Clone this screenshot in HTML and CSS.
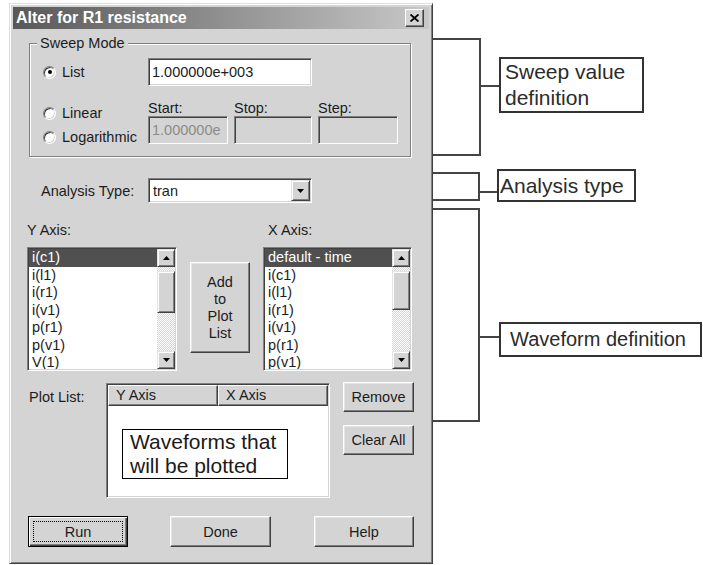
FILE: index.html
```html
<!DOCTYPE html>
<html lang="en">

<head>
    <meta charset="UTF-8">
    <meta name="viewport" content="width=device-width, initial-scale=1.0">
    <title>Alter for R1 resistance</title>
    <link rel="stylesheet" href="styles.css">
</head>

<body>
    <div class="page">
        <div class="dialog">
            <div class="titlebar">
                <span class="title">Alter for R1 resistance</span>
                <button class="close">
                    <svg width="9" height="8" viewBox="0 0 9 8"><path d="M0.5 0.5L8.5 7.5M8.5 0.5L0.5 7.5" stroke="#000" stroke-width="1.8"/></svg>
                </button>
            </div>

            <!-- sweep mode -->
            <div class="group">
                <div class="group-title">Sweep Mode</div>
                <div class="sweep">
                    <label class="radio"><span class="dot checked"></span>List</label>
                    <div class="field wide">1.000000e+003</div>
                    <div class="modes">
                        <label class="radio"><span class="dot"></span>Linear</label>
                        <label class="radio"><span class="dot"></span>Logarithmic</label>
                    </div>
                    <div class="cap c2">Start:</div>
                    <div class="cap c3">Stop:</div>
                    <div class="cap c4">Step:</div>
                    <div class="field off c2">1.000000e</div>
                    <div class="field off c3"></div>
                    <div class="field off c4"></div>
                </div>
            </div>

            <div class="analysis">
                <span class="analysis-label">Analysis Type:</span>
                <div class="combo">
                    <span>tran</span>
                    <span class="combo-btn">
                        <svg width="7" height="4" viewBox="0 0 7 4"><polygon points="0,0 7,0 3.5,4" fill="#000"/></svg>
                    </span>
                </div>
            </div>

            <!-- axis lists -->
            <div class="axes">
                <div class="axis-label">Y Axis:</div>
                <div></div>
                <div class="axis-label x">X Axis:</div>

                <div class="list">
                    <div class="items">
                        <div class="sel">i(c1)</div>
                        <div>i(l1)</div>
                        <div>i(r1)</div>
                        <div>i(v1)</div>
                        <div>p(r1)</div>
                        <div>p(v1)</div>
                        <div>V(1)</div>
                    </div>
                    <div class="sb">
                        <span class="sb-btn"><svg width="7" height="4" viewBox="0 0 7 4"><polygon points="0,4 7,4 3.5,0" fill="#000"/></svg></span>
                        <span class="track gap"></span>
                        <span class="thumb"></span>
                        <span class="track"></span>
                        <span class="sb-btn"><svg width="7" height="4" viewBox="0 0 7 4"><polygon points="0,0 7,0 3.5,4" fill="#000"/></svg></span>
                    </div>
                </div>

                <button class="btn add">Add<br>to<br>Plot<br>List</button>

                <div class="list">
                    <div class="items">
                        <div class="sel">default - time</div>
                        <div>i(c1)</div>
                        <div>i(l1)</div>
                        <div>i(r1)</div>
                        <div>i(v1)</div>
                        <div>p(r1)</div>
                        <div>p(v1)</div>
                    </div>
                    <div class="sb">
                        <span class="sb-btn"><svg width="7" height="4" viewBox="0 0 7 4"><polygon points="0,4 7,4 3.5,0" fill="#000"/></svg></span>
                        <span class="track gap"></span>
                        <span class="thumb short"></span>
                        <span class="track"></span>
                        <span class="sb-btn"><svg width="7" height="4" viewBox="0 0 7 4"><polygon points="0,0 7,0 3.5,4" fill="#000"/></svg></span>
                    </div>
                </div>
            </div>

            <!-- plot list -->
            <div class="plot">
                <span class="plot-label">Plot List:</span>
                <div class="plotbox">
                    <div class="plothead">
                        <span>Y Axis</span>
                        <span>X Axis</span>
                    </div>
                    <div class="callout">Waveforms that<br>will be plotted</div>
                </div>
                <div class="side">
                    <button class="btn">Remove</button>
                    <button class="btn">Clear All</button>
                </div>
            </div>

            <div class="actions">
                <button class="btn default run">Run</button>
                <button class="btn done">Done</button>
                <button class="btn help">Help</button>
            </div>
        </div>

        <!-- annotations -->
        <div class="notes">
            <div class="bracket b1"></div>
            <div class="note n1">Sweep value<br>definition</div>
            <div class="bracket b2"></div>
            <div class="note n2">Analysis type</div>
            <div class="bracket b3"></div>
            <div class="note n3">Waveform definition</div>
        </div>
    </div>
</body>

</html>
```

FILE: styles.css
```css
* {
    box-sizing: border-box;
}

body {
    margin: 0;
    background: #fff;
    font-family: "Liberation Sans", Arial, sans-serif;
    font-size: 14.5px;
    color: #1c1c1c;
}

.page {
    display: flex;
    align-items: flex-start;
}

.dialog {
    flex: none;
    width: 424px;
    height: 561px;
    margin: 3px 0 0 9px;
    padding: 3px;
    background: #d4d4d4;
    border: 1px solid;
    border-color: #dedede #404040 #404040 #dedede;
    box-shadow: inset 1px 1px #fff, inset -1px -1px #808080;
}

.titlebar {
    height: 22px;
    display: flex;
    align-items: center;
    justify-content: space-between;
    padding: 0 5px 0 3px;
    background: linear-gradient(to right, #585858, #c8c8c8);
}

.title {
    color: #fff;
    font-weight: bold;
    font-size: 16px;
}

.close {
    width: 19px;
    height: 18px;
    padding: 0;
    display: flex;
    align-items: center;
    justify-content: center;
    background: #d4d4d4;
    border: 1px solid;
    border-color: #fff #404040 #404040 #fff;
    box-shadow: inset -1px -1px #808080;
}

/* raised button */
.btn {
    font: inherit;
    color: #1c1c1c;
    background: #d4d4d4;
    border: 1px solid;
    border-color: #fff #404040 #404040 #fff;
    box-shadow: inset -1px -1px #808080, inset 1px 1px #e4e4e4;
    padding: 0;
}

.btn.default {
    border-color: #000;
    box-shadow: inset 1px 1px #fff, inset -1px -1px #404040, inset -2px -2px #808080;
    outline: 1px dotted #000;
    outline-offset: -6px;
}

/* sunken field */
.field,
.combo,
.list,
.plotbox {
    background: #fff;
    border: 1px solid;
    border-color: #808080 #fff #fff #808080;
    box-shadow: inset 1px 1px #404040, inset -1px -1px #d4d4d4;
}

.group {
    margin: 14px 0 0 16px;
    width: 382px;
    height: 114px;
    border: 1px solid #808080;
    box-shadow: inset 1px 1px #fff, 1px 1px #fff;
}

.group-title {
    width: fit-content;
    margin: -9px 0 0 7px;
    padding: 0 3px;
    background: #d4d4d4;
    line-height: 16px;
}

.sweep {
    display: grid;
    grid-template-columns: 112px 80px 78px 80px;
    grid-template-rows: 28px 30px 28px;
    column-gap: 6px;
    padding-top: 7px;
}

.radio {
    display: flex;
    align-items: center;
    gap: 6px;
    padding-left: 13px;
    white-space: nowrap;
}

.dot {
    position: relative;
    flex: none;
    width: 13px;
    height: 13px;
    border-radius: 50%;
    background: #fff;
    border: 1px solid;
    border-color: #808080 #fff #fff #808080;
    box-shadow: inset 1px 1px #404040, inset -1px -1px #d4d4d4;
}

.dot.checked::after {
    content: "";
    position: absolute;
    left: 3.5px;
    top: 3.5px;
    width: 4px;
    height: 4px;
    border-radius: 50%;
    background: #000;
}

.field {
    display: flex;
    align-items: center;
    padding-left: 3px;
    white-space: nowrap;
    overflow: hidden;
}

.field.wide {
    grid-column: 2 / 4;
    grid-row: 1;
}

.field.off {
    grid-row: 3;
    background: #d4d4d4;
    color: #8c8c8c;
}

.c2 {
    grid-column: 2;
}

.c3 {
    grid-column: 3;
}

.c4 {
    grid-column: 4;
}

.modes {
    grid-column: 1;
    grid-row: 2 / 4;
    height: 58px;
    padding-top: 15px;
}

.modes .radio {
    height: 24px;
}

.cap {
    grid-row: 2;
    align-self: end;
    line-height: 16px;
}

.analysis {
    display: flex;
    align-items: center;
    height: 25px;
    margin: 21px 0 0 28px;
}

.analysis-label {
    width: 107px;
}

.combo {
    width: 164px;
    height: 25px;
    display: flex;
    align-items: center;
    justify-content: space-between;
    padding: 1px 1px 1px 4px;
}

.combo-btn,
.sb-btn {
    display: flex;
    align-items: center;
    justify-content: center;
    background: #d4d4d4;
    border: 1px solid;
    border-color: #e4e4e4 #404040 #404040 #e4e4e4;
    box-shadow: inset 1px 1px #fff, inset -1px -1px #808080;
}

.combo-btn {
    width: 19px;
    height: 21px;
}

.axes {
    display: grid;
    grid-template-columns: 150px 60px 149px;
    grid-template-rows: 16px 124px;
    column-gap: 13px;
    row-gap: 9px;
    margin: 19px 0 0 14px;
}

.axis-label {
    line-height: 16px;
}

.axis-label.x {
    padding-left: 5px;
}

.list {
    display: flex;
    padding: 1px;
    overflow: hidden;
}

.items {
    flex: 1;
    overflow: hidden;
}

.items div {
    line-height: 17.5px;
    padding-left: 3px;
    white-space: nowrap;
}

.items .sel {
    background: #505050;
    color: #fff;
}

.sb {
    width: 18px;
    display: flex;
    flex-direction: column;
}

.sb-btn {
    height: 18px;
    flex: none;
}

.track {
    flex: 1;
    background: repeating-conic-gradient(#d4d4d4 0 25%, #fff 0 50%) 0 0 / 2px 2px;
}

.track.gap {
    flex: none;
    height: 4px;
}

.thumb {
    height: 42px;
    flex: none;
    background: #d4d4d4;
    border: 1px solid;
    border-color: #e4e4e4 #404040 #404040 #e4e4e4;
    box-shadow: inset 1px 1px #fff, inset -1px -1px #808080;
}

.thumb.short {
    height: 39px;
}

.add {
    height: 91px;
    margin-top: 15px;
    line-height: 17px;
}

.plot {
    display: flex;
    align-items: flex-start;
    margin: 11px 0 0 16px;
}

.plot-label {
    width: 77px;
    padding-top: 7px;
    line-height: 16px;
}

.plotbox {
    position: relative;
    width: 224px;
    height: 115px;
    margin-top: 1px;
    padding: 1px;
}

.plothead {
    display: flex;
}

.plothead span {
    width: 110px;
    height: 21px;
    line-height: 19px;
    padding-left: 7px;
    background: #d4d4d4;
    border: 1px solid;
    border-color: #fff #404040 #404040 #fff;
    box-shadow: inset -1px -1px #808080;
}

.callout {
    position: absolute;
    left: 15px;
    top: 45px;
    width: 166px;
    height: 50px;
    padding-left: 7px;
    border: 1px solid #000;
    background: #fff;
    font-size: 21px;
    line-height: 24px;
    color: #1a1a1a;
}

.side {
    display: flex;
    flex-direction: column;
    gap: 13px;
    margin-left: 13px;
}

.side .btn {
    width: 71px;
    height: 30px;
}

.actions {
    display: flex;
    margin: 18px 0 0 15px;
}

.actions .btn {
    width: 100px;
    height: 31px;
}

.actions .done {
    width: 101px;
    margin-left: 42px;
}

.actions .help {
    margin-left: 43px;
}

/* callouts to the right of the dialog */
.notes {
    position: relative;
    flex: none;
    width: 270px;
    height: 565px;
    color: #2b2b2b;
}

.bracket {
    position: absolute;
    left: 0;
    width: 47px;
    border: 2px solid #444;
    border-left: none;
}

.bracket::after {
    content: "";
    position: absolute;
    left: calc(100% + 2px);
    height: 2px;
    background: #444;
}

.b1 {
    top: 38px;
    height: 118px;
    width: 48px;
}

.b1::after {
    top: 45px;
    width: 18px;
}

.b2 {
    top: 172px;
    height: 29px;
}

.b2::after {
    top: 17px;
    width: 17px;
}

.b3 {
    top: 208px;
    height: 214px;
}

.b3::after {
    top: 126px;
    width: 19px;
}

.note {
    position: absolute;
    border: 2px solid #333;
    background: #fff;
    font-size: 21px;
}

.n1 {
    left: 66px;
    top: 57px;
    width: 145px;
    height: 56px;
    padding-left: 4px;
    line-height: 26px;
}

.n2 {
    left: 64px;
    top: 169px;
    width: 139px;
    height: 33px;
    padding-left: 1px;
    line-height: 29px;
}

.n3 {
    left: 66px;
    top: 322px;
    width: 203px;
    height: 35px;
    padding-left: 9px;
    font-size: 20px;
    line-height: 31px;
}
```
